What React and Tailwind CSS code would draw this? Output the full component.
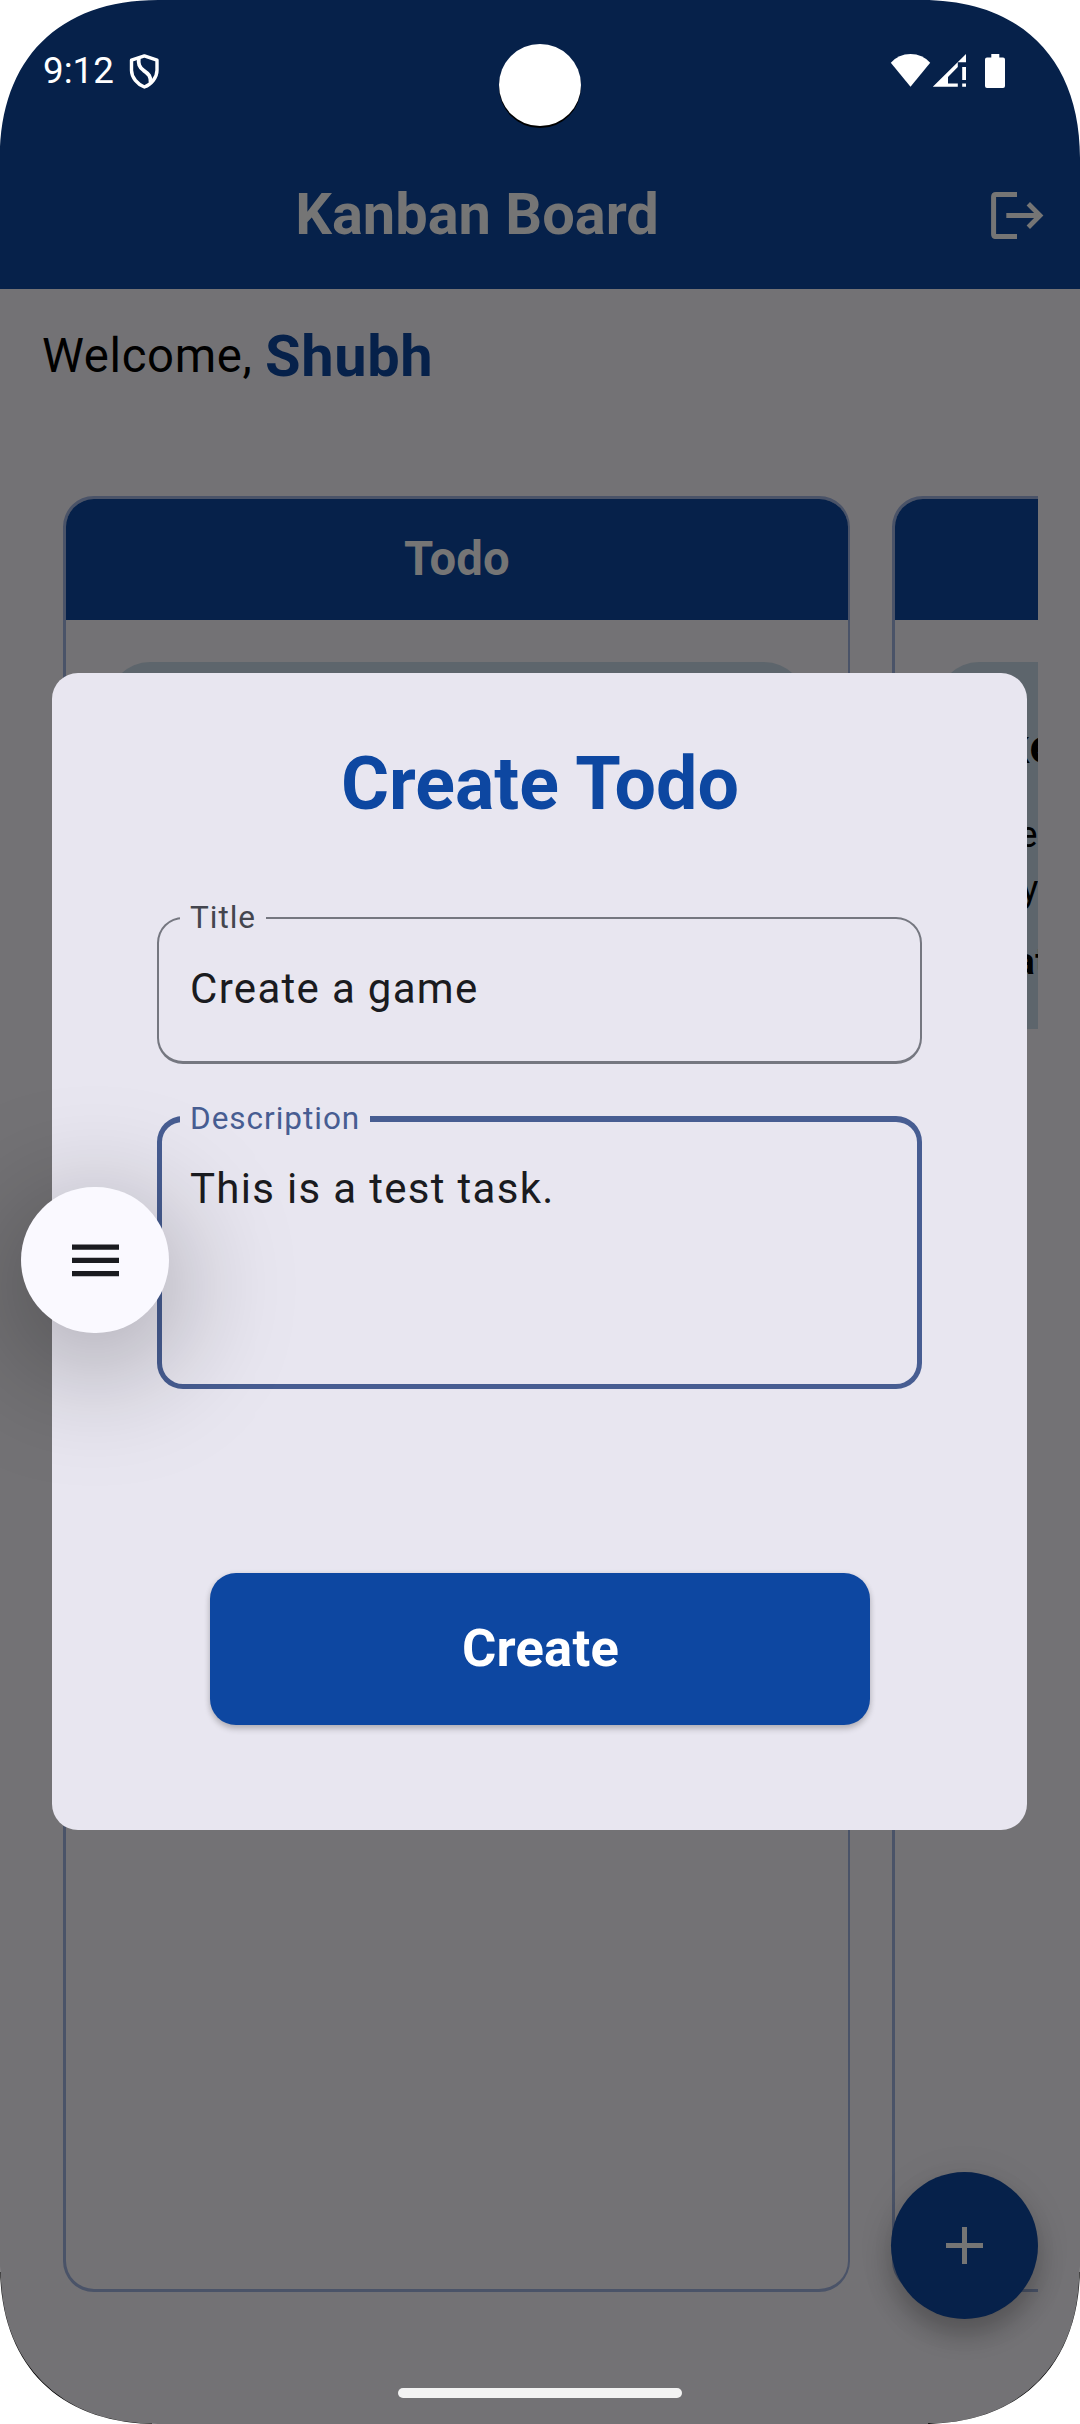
import React from "react";

function ShieldIcon() {
  return (
    <svg className="ml-[14px] h-[36px] w-[31px]" viewBox="129 53 31 36" fill="none" stroke="#fff" strokeWidth="3.4" strokeLinejoin="round">
      <path d="M144.4 55.9 L157 60.2 V70.3 C157 77.5 151.3 84.4 144.4 87 C137.5 84.4 131.5 77.5 131.5 70.3 V60.2 Z" />
      <path d="M138.8 58 C138.2 64 139 67 143.5 70.3 C149 74 150.8 76.5 150.6 82.6" strokeWidth="3.8" />
    </svg>
  );
}

function StatusIcons() {
  return (
    <svg className="h-[36px] w-[117px]" viewBox="890 53 117 36" fill="#fff">
      <path d="M910.5 86.8 L890.8 62.8 Q898.5 54 910.5 54 T930.2 62.8 Z" />
      <path d="M932.8 86.8 L966 54 V62.3 H957.8 V67 L948 77 V83.5 H957.8 V86.8 Z" />
      <path d="M962.2 67 H966 V80 H962.2 Z M962.2 83.4 H966 V86.8 H962.2 Z" />
      <path d="M991.3 54 H999.3 V57.4 H1003 Q1005 57.4 1005 59.4 V86 Q1005 88 1003 88 H987 Q985 88 985 86 V59.4 Q985 57.4 987 57.4 H991.3 Z" />
    </svg>
  );
}

function LogoutIcon() {
  return (
    <svg className="mb-[1px] h-[48px] w-[54px]" viewBox="990 191 54 48" fill="none" stroke="#757575" strokeWidth="5">
      <path d="M1017 194.4 H996 Q993.6 194.4 993.6 196.8 V234.2 Q993.6 236.6 996 236.6 H1017" />
      <path d="M1006.3 215.5 H1040 M1028.3 203.8 L1040 215.5 L1028.3 227.2" strokeWidth="4.8" />
    </svg>
  );
}

// Rounded display corner; mirrored for each of the four screen corners.
function Corner({ className }) {
  return (
    <svg className={"pointer-events-none absolute h-[160px] w-[160px] " + className} viewBox="0 0 160 160">
      <path d="M0 158 C0 59 59 0 158 0 L0 0 Z" fill="#fff" />
    </svg>
  );
}

function CornerEdge({ className }) {
  return (
    <svg className={"pointer-events-none absolute h-[160px] w-[160px] " + className} viewBox="0 0 160 160">
      <path d="M0 152 C1 60 60 1 152 0" fill="none" stroke="#000" strokeWidth="1.4" />
    </svg>
  );
}

function Column({ title, children }) {
  return (
    <section className="flex h-[1796px] w-[787px] shrink-0 flex-col overflow-hidden rounded-[31px] border-[3px] border-r-2 border-[#4a5368]">
      <h2 className="flex h-[121px] shrink-0 items-center justify-center bg-[#06214a] text-[47.25px] font-bold leading-none tracking-[0.15px] text-[#757575]">
        {title}
      </h2>
      <div className="flex flex-col p-[42px]">{children}</div>
    </section>
  );
}

function Field({ label, value, className, labelClassName, boxClassName }) {
  return (
    <div className={"relative w-[765px] " + className}>
      <div className={"h-full rounded-[26px] border-solid " + boxClassName}>{value}</div>
      <span className={"absolute left-[23px] h-[37px] bg-[#e8e6f0] pl-[10px] text-[31.5px] leading-[37px] tracking-[0.98px] " + labelClassName}>
        {label}
      </span>
    </div>
  );
}

export default function App() {
  return (
    <div className="relative flex h-[2424px] w-[1080px] flex-col overflow-hidden bg-[#737275] font-['Roboto',sans-serif]">
      <header className="flex h-[289px] shrink-0 flex-col bg-[#06214a]">
        <div className="flex h-[142px] items-start justify-between pt-[53px] pr-[73px] pl-[43px]">
          <div className="flex items-start">
            <span className="w-[72px] text-[36.75px] leading-[36px] whitespace-nowrap text-white">9:12</span>
            <ShieldIcon />
          </div>
          <StatusIcons />
        </div>
        <div className="flex h-[147px] items-center">
          <h1 className="flex-1 pb-[4px] text-center text-[57.75px] leading-[68px] font-bold text-[#757575]">Kanban Board</h1>
          <div className="flex w-[126px] justify-center">
            <LogoutIcon />
          </div>
        </div>
      </header>

      <main className="flex flex-col px-[42px] pt-[33px]">
        <div className="flex h-[68px] items-center tracking-[0.656px]">
          <span className="w-[223px] text-[47.25px] leading-[56px] whitespace-pre text-black">Welcome, </span>
          <span className="text-[57.75px] leading-[68px] font-bold text-[#06214a]">Shubh</span>
        </div>

        <div className="mt-[106px] flex gap-[42px] overflow-hidden pl-[21px]">
          <Column title="Todo">
            <div className="h-[367px] rounded-[42px] bg-[#5d656c]" />
          </Column>
          <Column title="">
            <div className="flex h-[367px] flex-col rounded-[42px] bg-[#5d656c] pt-[57px] text-[36.75px] tracking-[0.656px] text-black">
              <b className="pl-[67px] text-[47.25px] leading-[56px]">ke</b>
              <span className="mt-[33px] pl-[81px] leading-[54px]">e</span>
              <span className="pl-[84px] leading-[54px]">y</span>
              <b className="mt-[19px] pl-[78px] leading-[54px]">at</b>
            </div>
          </Column>
        </div>
      </main>

      {/* Add button */}
      <div className="absolute top-[2172px] left-[891px] flex h-[147px] w-[147px] items-center justify-center rounded-full bg-[#06214a] shadow-[0_16px_26px_rgba(0,0,0,0.24),0_3px_44px_rgba(0,0,0,0.06)]">
        <svg className="h-[37px] w-[37px]" viewBox="0 0 37 37" fill="#757575">
          <path d="M16 0 H21 V16 H37 V21 H21 V37 H16 V21 H0 V16 H16 Z" />
        </svg>
      </div>

      {/* Dialog */}
      <div className="absolute top-[673px] left-[52px] flex h-[1157px] w-[975px] flex-col items-center rounded-[26px] bg-[#e8e6f0]">
        <h2 className="mt-[68px] pl-[1px] text-[73.5px] leading-[86px] font-bold text-[#0d47a1]">Create Todo</h2>
        <Field
          label="Title"
          value="Create a game"
          className="mt-[90px] h-[147px]"
          boxClassName="border-t-2 border-r-2 border-b-[3px] border-l-[2.6px] border-[#757780] pt-[45px] pl-[31px] text-[42px] leading-[49px] tracking-[1.31px] text-[#1a1b20]"
          labelClassName="top-[-18px] w-[86px] text-[#44464f]"
        />
        <Field
          label="Description"
          value="This is a test task."
          className="mt-[52px] h-[273px]"
          boxClassName="border-[5px] border-t-[6px] border-[#475d92] pt-[42px] pl-[28px] text-[42px] leading-[49px] tracking-[1.31px] text-[#1a1b20]"
          labelClassName="top-[-16px] w-[190px] text-[#475d92]"
        />
        <button className="mt-[184px] h-[152px] w-[660px] rounded-[26px] bg-[#0d47a1] pb-[2px] pl-[2px] text-[52.5px] font-bold tracking-[0.26px] text-white shadow-[0_4px_6px_rgba(0,0,0,0.2),0_1px_6px_rgba(0,0,0,0.08)]">
          Create
        </button>
      </div>

      {/* Floating menu handle */}
      <div className="absolute top-[1187px] left-[21px] flex h-[146px] w-[148px] items-center justify-center rounded-full bg-[#faf9ff] shadow-[0_26px_118px_14px_rgba(0,0,0,0.27)]">
        <svg className="ml-[1px] h-[33px] w-[47px]" viewBox="0 0 47 33" fill="#1a1b20">
          <path d="M0 0.5 H47 V5.7 H0 Z M0 13.7 H47 V19 H0 Z M0 27 H47 V32.3 H0 Z" />
        </svg>
      </div>

      {/* Camera cut-out */}
      <div className="absolute top-[44px] left-[499px] h-[82px] w-[82px] rounded-full bg-white shadow-[0_2px_0_#000]" />

      {/* Gesture bar */}
      <div className="absolute top-[2388px] left-[398px] h-[10px] w-[284px] rounded-full bg-[#f3f3f3]" />

      <CornerEdge className="bottom-0 left-0 -scale-y-100" />
      <CornerEdge className="right-0 bottom-0 -scale-100" />
      <Corner className="top-0 left-0" />
      <Corner className="top-0 right-0 -scale-x-100" />
      <Corner className="bottom-0 left-0 -scale-y-100" />
      <Corner className="right-0 bottom-0 -scale-100" />
    </div>
  );
}
